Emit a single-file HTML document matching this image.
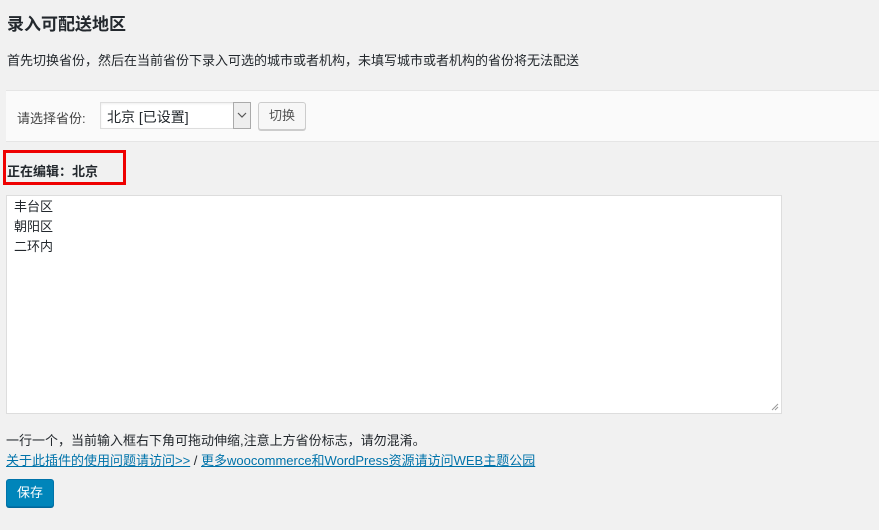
<!DOCTYPE html>
<html><head><meta charset="utf-8"><style>
*{box-sizing:border-box}
body{margin:0;width:879px;height:530px;background:#f1f1f1;font-family:"Liberation Sans","Noto Sans CJK SC",sans-serif;color:#23282d;font-size:13px;position:relative;overflow:hidden}
.a{position:absolute;white-space:nowrap}
h1{position:absolute;left:7px;top:10px;margin:0;font-size:17px;font-weight:bold;color:#23282d}
.panel{position:absolute;left:6px;top:90px;width:880px;height:52px;background:#fafafa;border-top:1px solid #e5e5e5;border-bottom:1px solid #e5e5e5}
.sel{position:absolute;left:100px;top:102px;width:151px;height:27px;background:#fff;border:1px solid #ddd;box-shadow:inset 0 1px 2px rgba(0,0,0,.07);font-size:14px}
.sel .ar{position:absolute;right:-1px;top:-1px;width:18px;height:27px;background:#eee;border:1px solid #aaa}
.btn{position:absolute;left:258px;top:102px;width:48px;height:28px;background:#f7f7f7;border:1px solid #ccc;border-radius:3px;box-shadow:0 1px 0 #ccc;text-align:center;line-height:26px;color:#555}
.red{position:absolute;left:3px;top:150px;width:123px;height:35px;border:3px solid #e00}
.ta{position:absolute;left:6px;top:195px;width:776px;height:219px;background:#fff;border:1px solid #ddd;padding:1px 7px;line-height:20px}
a{color:#0073aa;text-decoration:underline}
.save{position:absolute;left:6px;top:479px;width:48px;height:28px;background:#0085ba;border:1px solid #0073aa;border-radius:3px;color:#fff;text-align:center;line-height:26px;box-shadow:0 1px 0 #006799}
</style></head><body>
<h1>录入可配送地区</h1>
<div class="a" style="left:7px;top:50px">首先切换省份，然后在当前省份下录入可选的城市或者机构，未填写城市或者机构的省份将无法配送</div>
<div class="panel"></div>
<div class="a" style="left:17px;top:108px;color:#444">请选择省份:</div>
<div class="sel"><span class="a" style="left:6px;top:4px">北京 [已设置]</span><div class="ar"><svg width="16" height="25" viewBox="0 0 16 25"><path d="M4 10l4 4L12 10" fill="none" stroke="#555" stroke-width="1.2"/></svg></div></div>
<div class="btn">切换</div>
<div class="red"></div>
<div class="a" style="left:7px;top:161px;font-weight:bold">正在编辑：北京</div>
<div class="ta">丰台区<br>朝阳区<br>二环内<svg style="position:absolute;right:2px;bottom:2px" width="8" height="8"><path d="M7 1L1 7M7 4L4 7" stroke="#999"/></svg></div>
<div class="a" style="left:6px;top:430px">一行一个，当前输入框右下角可拖动伸缩,注意上方省份标志，请勿混淆。</div>
<div class="a" style="left:6px;top:450px"><a>关于此插件的使用问题请访问&gt;&gt;</a> / <a>更多woocommerce和WordPress资源请访问WEB主题公园</a></div>
<div class="save">保存</div>
</body></html>
